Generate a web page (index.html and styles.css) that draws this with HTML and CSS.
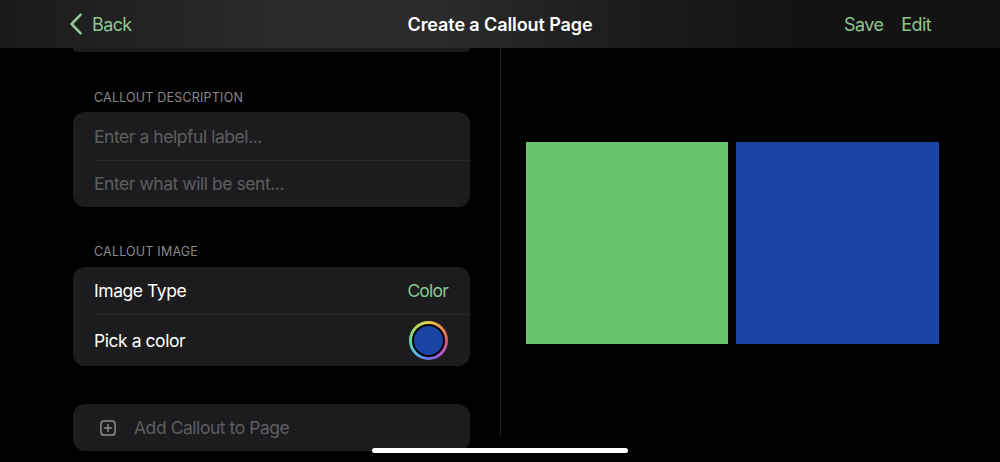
FILE: index.html
```html
<!DOCTYPE html>
<html lang="en">
  <head>
    <meta charset="UTF-8">
    <meta name="viewport" content="width=device-width, initial-scale=1.0">
    <title>Create a Callout Page</title>
    <link rel="stylesheet" href="styles.css">
  </head>
  <body>
    <header class="nav">
      <div class="nav-left">
        <svg class="back-icon" width="14" height="22" viewBox="0 0 14 22" fill="none">
          <path d="M11.6 1.6 L2.6 11 L11.6 20.4" stroke="#8cc78f" stroke-width="2.6" stroke-linecap="round" stroke-linejoin="round"/>
        </svg>
        <span class="nav-link">Back</span>
      </div>
      <div class="nav-title">Create a Callout Page</div>
      <div class="nav-right">
        <span class="nav-link">Save</span>
        <span class="nav-link">Edit</span>
      </div>
    </header>
    <main class="content">
      <section class="form-pane">
        <div class="card-stub"></div>

        <div class="section-label label-description">CALLOUT DESCRIPTION</div>
        <div class="card">
          <div class="row row-input"><span class="placeholder">Enter a helpful label...</span></div>
          <div class="row row-input"><span class="placeholder">Enter what will be sent...</span></div>
        </div>

        <div class="section-label label-image">CALLOUT IMAGE</div>
        <div class="card">
          <div class="row row-type">
            <span>Image Type</span>
            <span class="row-value">Color</span>
          </div>
          <div class="row row-color">
            <span>Pick a color</span>
            <span class="color-well"><span class="color-dot"></span></span>
          </div>
        </div>

        <div class="card add-card">
          <div class="row row-add">
            <svg class="add-icon" width="18" height="18" viewBox="0 0 18 18" fill="none">
              <rect x="1.9" y="1.9" width="14.2" height="14.2" rx="3.2" stroke="#8e8e90" stroke-width="1.5"/>
              <path d="M9 5.5 V12.5 M5.5 9 H12.5" stroke="#8e8e90" stroke-width="1.5" stroke-linecap="round"/>
            </svg>
            <span class="placeholder">Add Callout to Page</span>
          </div>
        </div>
      </section>
      <section class="preview-pane">
        <div class="tile tile-green"></div>
        <div class="tile tile-blue"></div>
      </section>
    </main>
    <div class="home-indicator"></div>
  </body>
</html>
```

FILE: styles.css
```css
* {
  box-sizing: border-box;
}

body {
  margin: 0;
  width: 1000px;
  height: 462px;
  overflow: hidden;
  background-color: #000;
  color: #fff;
  font-family: Inter, "Liberation Sans", sans-serif;
  font-size: 17.5px;
  letter-spacing: -0.45px;
}

.nav {
  display: flex;
  align-items: center;
  justify-content: space-between;
  height: 48px;
  padding: 0 69px;
  background: linear-gradient(90deg, #1a1a1a 0%, #2c2c2c 30%, #2a2a2a 45%, #1a1a1a 65%, #131313 80%, #131313 100%);
}

.nav-left {
  display: flex;
  align-items: center;
  gap: 9px;
}

.back-icon {
  display: block;
}

.nav-link {
  color: #8cc78f;
  font-size: 18px;
  letter-spacing: -0.6px;
}

.nav-title {
  font-size: 18px;
  font-weight: 600;
  letter-spacing: -0.1px;
  position: absolute;
  left: 0;
  width: 1000px;
  text-align: center;
}

.nav-right {
  display: flex;
  gap: 18px;
}

.content {
  display: flex;
  height: 390px;
}

.form-pane {
  width: 501px;
  padding: 0 30px 0 73px;
  border-right: 1px solid #1c1c1e;
}

.card-stub {
  height: 4px;
  background-color: #1c1c1e;
  border-radius: 0 0 10px 10px;
}

.section-label {
  padding-left: 21px;
  color: #8a8a8e;
  font-size: 12.5px;
  line-height: 16px;
  letter-spacing: 0.2px;
}

.label-description {
  margin-top: 38px;
  margin-bottom: 6px;
}

.label-image {
  margin-top: 37px;
  margin-bottom: 7px;
}

.card {
  background-color: #1c1c1e;
  border-radius: 12px;
  overflow: hidden;
}

.row {
  display: flex;
  align-items: center;
  justify-content: space-between;
  padding: 0 22px 0 21px;
  position: relative;
}

.row + .row::before {
  content: "";
  position: absolute;
  top: 0;
  left: 21px;
  right: 0;
  height: 1px;
  background-color: #2a2a2c;
}

.row-input {
  height: 47.5px;
}

.row-input:first-child {
  padding-top: 2px;
}

.row-type {
  height: 47px;
}

.row-color {
  height: 52px;
}

.placeholder {
  color: #5e5e61;
}

.row-value {
  color: #8cc78f;
  letter-spacing: -0.8px;
}

.color-well {
  display: flex;
  align-items: center;
  justify-content: center;
  width: 39px;
  height: 39px;
  border-radius: 50%;
  background: conic-gradient(#e9c64c, #e8924a, #d9556a, #b35bd6, #6e6fe8, #55b8e8, #5fd79a, #a6dc5c, #e9c64c);
}

.color-dot {
  width: 33px;
  height: 33px;
  border: 2px solid #000;
  border-radius: 50%;
  background-color: #1a44a3;
}

.add-card {
  margin-top: 38px;
}

.row-add {
  justify-content: flex-start;
  gap: 17px;
  height: 47px;
  padding-left: 26px;
}

.add-icon {
  display: block;
}

.preview-pane {
  display: flex;
  gap: 8px;
  padding: 94px 0 0 25px;
  align-items: flex-start;
}

.tile {
  height: 202px;
}

.tile-green {
  width: 202px;
  background-color: #68c66a;
}

.tile-blue {
  width: 203px;
  background-color: #1a44a3;
}

.home-indicator {
  position: absolute;
  top: 448px;
  left: 372px;
  width: 256px;
  height: 5px;
  border-radius: 3px;
  background-color: #fff;
}
```
